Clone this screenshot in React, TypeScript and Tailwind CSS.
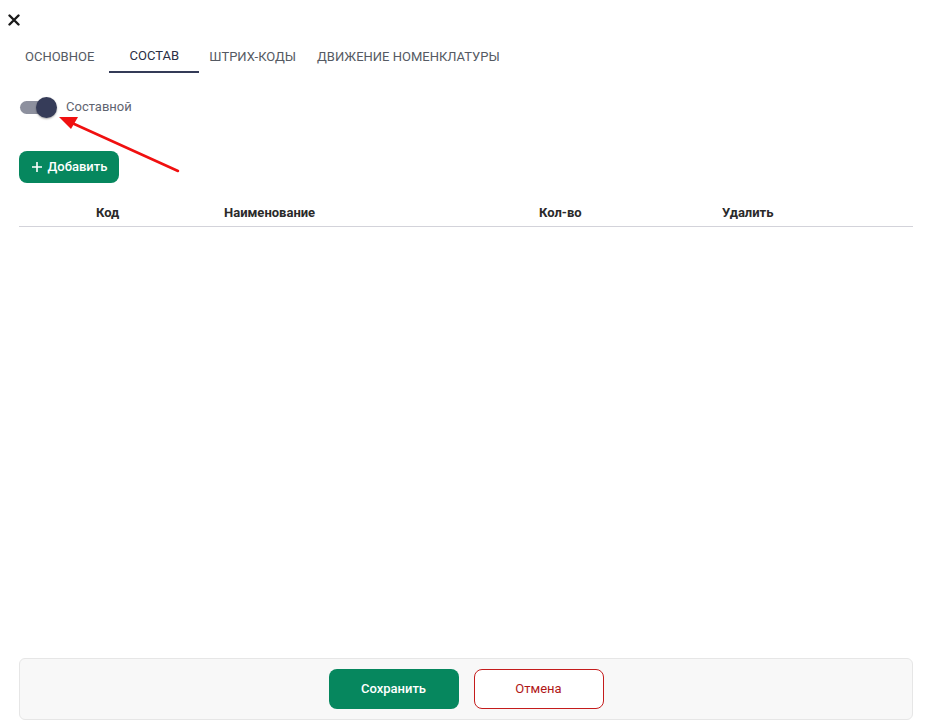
import React from "react";

export default function App() {
  const font = { fontFamily: "Roboto, 'Noto Sans', sans-serif" };
  return (
    <div className="relative w-[934px] h-[724px] bg-white overflow-hidden flex flex-col" style={font}>
      {/* close */}
      <div className="pl-[8px] pt-[14px] h-[37px]">
        <svg width="12" height="12" viewBox="0 0 12 12">
          <path d="M1.5 1.5 L10.5 10.5 M10.5 1.5 L1.5 10.5" stroke="#1a1a1a" strokeWidth="2.4" strokeLinecap="round" />
        </svg>
      </div>
      {/* tabs */}
      <div className="flex pl-[9px] h-[36px] items-stretch">
        <div className="pl-[16px] pr-[15px] pt-[3px] flex items-center text-[13px] text-[#555a63]">ОСНОВНОЕ</div>
        <div className="w-[90px] pt-[3px] flex items-center justify-center text-[13px] text-[#2a2f45] border-b-2 border-[#343b57]">СОСТАВ</div>
        <div className="pl-[10px] pr-[11px] pt-[3px] flex items-center text-[13px] text-[#555a63]">ШТРИХ-КОДЫ</div>
        <div className="px-[10px] pt-[3px] flex items-center text-[13px] text-[#555a63]">ДВИЖЕНИЕ НОМЕНКЛАТУРЫ</div>
      </div>
      {/* switch */}
      <div className="flex items-center pl-[20px] mt-[22px] h-[24px]">
        <div className="relative w-[37px] h-[20px] flex items-center">
          <div className="w-[34px] h-[13px] rounded-full bg-[#8d909e]" />
          <div className="absolute left-[16px] top-0 w-[21px] h-[21px] rounded-full bg-[#363c59] shadow-[0_1px_2px_rgba(0,0,0,0.35)]" />
        </div>
        <span className="ml-[9px] text-[13px] text-[#5f6470]">Составной</span>
      </div>
      {/* add button */}
      <div className="pl-[19px] mt-[32px]">
        <button className="h-[32px] w-[100px] rounded-[8px] bg-[#06875e] text-white text-[13px] font-medium flex items-center justify-center gap-[5px]">
          <svg width="12" height="12" viewBox="0 0 12 12">
            <path d="M6 1 V11 M1 6 H11" stroke="white" strokeWidth="1.6" />
          </svg>
          Добавить
        </button>
      </div>
      {/* table header */}
      <div className="ml-[19px] mr-[21px] mt-[16px] h-[28px] flex items-center border-b border-[#d3d3da] text-[13px] font-bold text-[#2a2a2a]">
        <div className="w-[77px]" />
        <div className="w-[128px]">Код</div>
        <div className="w-[315px]">Наименование</div>
        <div className="w-[183px]">Кол-во</div>
        <div>Удалить</div>
      </div>
      <div className="flex-1" />
      {/* footer */}
      <div className="ml-[19px] mr-[21px] mb-[4px] h-[62px] rounded-[6px] border border-[#e6e6e6] bg-[#f8f8f8] flex items-center justify-center gap-[15px]">
        <button className="w-[130px] h-[40px] rounded-[8px] bg-[#06875e] text-white text-[13px] font-medium">Сохранить</button>
        <button className="w-[130px] h-[40px] rounded-[8px] bg-white border border-[#c41c1c] text-[#b01818] text-[13px]">Отмена</button>
      </div>
      {/* red arrow annotation */}
      <svg className="absolute left-0 top-0 pointer-events-none" width="934" height="724">
        <line x1="178" y1="171" x2="72" y2="123" stroke="#f01010" strokeWidth="2.5" strokeLinecap="round" />
        <polygon points="59,117 78,117 71,129" fill="#f01010" />
      </svg>
    </div>
  );
}
